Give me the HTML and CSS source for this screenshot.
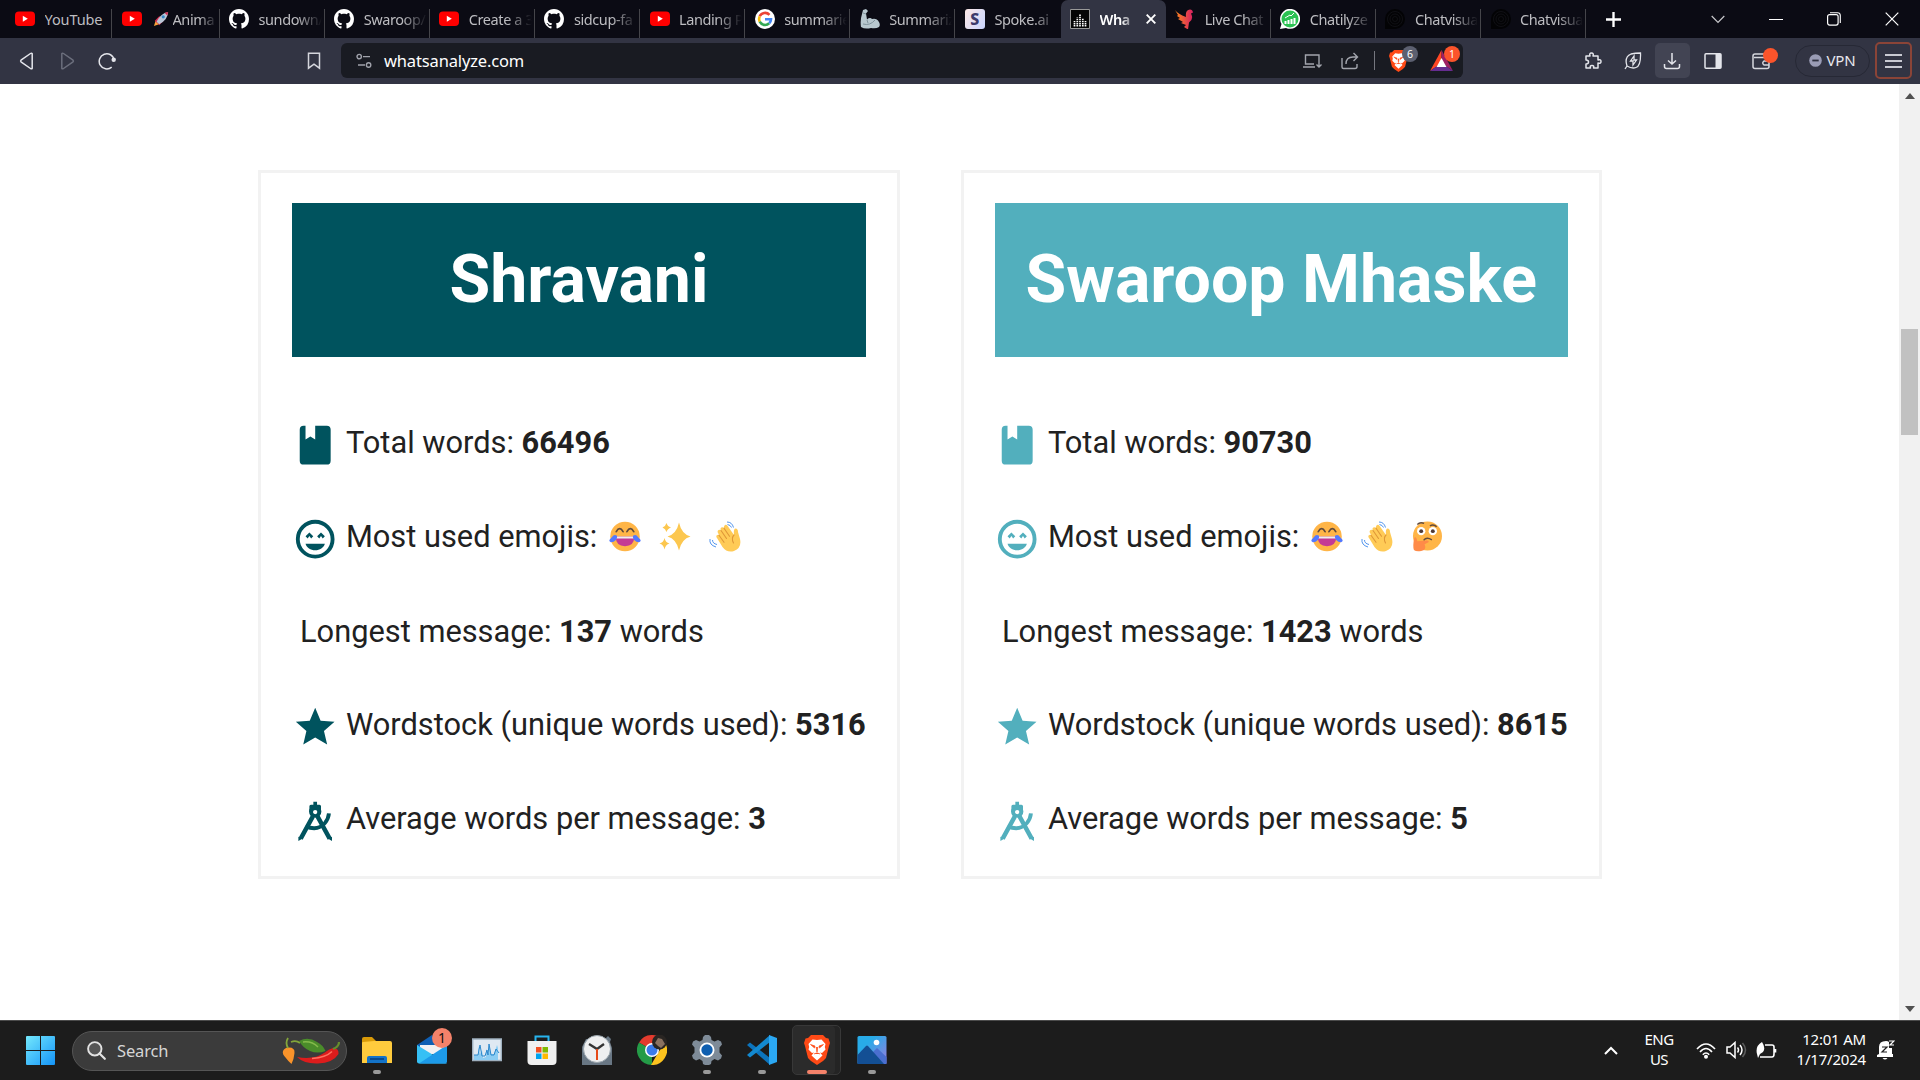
FILE: index.html
```html
<!DOCTYPE html>
<html lang="en">
<head>
<meta charset="utf-8">
<title>WhatsAnalyze</title>
<link rel="stylesheet" href="styles.css">
</head>
<body>
<svg class="defs" width="0" height="0">
  <symbol id="yt" viewBox="0 0 20 20"><rect x="0" y="2.500" width="20" height="14.500" rx="4" fill="#f00"/><path d="M7.800 6.800v6l5-3z" fill="#fff"/></symbol>
  <symbol id="gh" viewBox="0 0 16 16"><path fill="#fff" d="M8 0C3.580 0 0 3.580 0 8c0 3.540 2.290 6.530 5.470 7.590.4.070.55-.17.55-.38 0-.19-.01-.82-.01-1.490-2.010.37-2.530-.49-2.690-.94-.09-.23-.48-.94-.82-1.130-.28-.15-.68-.52-.01-.53.63-.01 1.080.58 1.230.82.72 1.210 1.870.87 2.330.66.07-.52.28-.87.51-1.070-1.780-.2-3.640-.89-3.640-3.950 0-.87.31-1.590.82-2.150-.08-.2-.36-1.020.08-2.120 0 0 .67-.21 2.200.82.64-.18 1.320-.27 2-.27s1.360.09 2 .27c1.530-1.040 2.200-.82 2.200-.82.44 1.100.16 1.920.08 2.120.51.56.82 1.270.82 2.150 0 3.070-1.870 3.750-3.650 3.950.29.25.54.73.54 1.480 0 1.070-.01 1.930-.01 2.200 0 .21.15.46.55.38A8.010 8.010 0 0 0 16 8c0-4.420-3.580-8-8-8z"/></symbol>
  <symbol id="swirl" viewBox="0 0 20 20"><path d="M0 20V10a10 10 0 1 1 10 10z" fill="#030305"/><g fill="none" stroke="#15151b" stroke-width=".7"><circle cx="10" cy="10" r="7.500"/><circle cx="10" cy="10" r="5"/><circle cx="10" cy="10" r="2.500"/></g></symbol>
  <symbol id="lion" viewBox="0 0 26 30"><path d="M7 0h12l3 3 2.500.5L26 8l-1 3-3 12-3 3-6 4-6-4-3-3L1 11 0 8l1.500-4.500L4 3z" fill="#ff4a16"/><path d="M13 5l4.500-.5L21.500 9l-.7 3 .7 2.500L18 18l-2-.5 2.500 3L13 25.500 7.500 20.500l2.500-3L8 18l-3.500-3.500.7-2.500-.7-3 4-4.500z" fill="#fff"/><path d="M6.500 9.500l4.500 1.500-.5 2zM19.500 9.500L15 11l.5 2zM12.200 12l.8 5 .8-5M10 19l3-1.200 3 1.200" fill="#ff4a16" stroke="#ff4a16" stroke-width=".7"/></symbol>
  <symbol id="book" viewBox="0 0 24 24"><path d="M18 22a2 2 0 0 0 2-2V4a2 2 0 0 0-2-2h-6v7L9.500 7.500 7 9V2H6a2 2 0 0 0-2 2v16a2 2 0 0 0 2 2z"/></symbol>
  <symbol id="happy" viewBox="0 0 24 24"><circle cx="12" cy="12" r="9" fill="none" stroke="currentColor" stroke-width="2"/><path d="M7 14.300c.6 2.100 2.600 3.400 5 3.400s4.400-1.300 5-3.400zM7 10.500l1.100 1.100L9 10.400l.9 1.200L11 10.500 9 8.500zM13 10.500l1.100 1.100.9-1.200.9 1.200 1.100-1.100-2-2z"/></symbol>
  <symbol id="star" viewBox="0 0 24 24"><path d="M12 17.270L18.180 21l-1.640-7.030L22 9.240l-7.190-.62L12 2 9.190 8.620 2 9.240l5.450 4.730L5.820 21z"/></symbol>
  <symbol id="compass" viewBox="0 0 24 24"><g fill="none" stroke="currentColor"><path d="M12 2v3" stroke-width="1.900"/><circle cx="12" cy="7" r="2.100" stroke-width="2.200"/><path d="M10.800 9.500L4.500 21M13.200 9.500L19.500 21" stroke-width="2.300"/><path d="M7 14.700c3.900 1.500 7.500 1.300 10-1.700 1.200-1.500 2-3.200 2.100-5" stroke-width="2"/></g><path d="M9 4.300q0-.8.800-.8h4.400q.8 0 .8.800V7H9zM3.300 20v2.200l2.200-1.200zM20.700 20v2.200l-2.200-1.200z"/><circle cx="12" cy="7.300" r="1.100" fill="#fff"/></symbol>
  <symbol id="joy" viewBox="0 0 33 31"><circle cx="16.500" cy="15.500" r="15.200" fill="#ffb547"/><path d="M7.500 10.500q3.500-6 7 0M18.500 10.500q3.500-6 7 0" fill="none" stroke="#614a3c" stroke-width="1.800" stroke-linecap="round"/><path d="M7 15.500h19q0 10-9.500 10T7 15.500z" fill="#c43a94"/><path d="M7 15.500h19v2H7.200z" fill="#eee"/><path d="M8 14.500q1 2-1 4.500T2 21.500Q-.5 20 .8 18.500L4.500 14.500q1.500-1.300 3.500 0zM25 14.500q-1 2 1 4.500t5 2.500q2.500-1.500 1.200-3L28.500 14.500q-1.500-1.300-3.500 0z" fill="#5378ff"/></symbol>
  <symbol id="sparkle" viewBox="0 0 32 31"><path d="M20 1.500Q22.500 13 31.500 15.500 22.500 18 20 29.500 17.500 18 8.500 15.500 17.500 13 20 1.500zM7.500 2Q8.500 5.500 12 6.500 8.500 7.500 7.500 11 6.500 7.500 3.500 6.500 6.500 5.500 7.500 2zM5.500 17Q6.500 21.500 10.500 22.500 6.500 23.500 5.500 28.500 4.500 23.500.5 22.500 4.500 21.500 5.500 17z" fill="#fcc74f"/></symbol>
  <symbol id="wave" viewBox="0 0 32 31"><path d="M8 17q-1.500-2 .3-3 1-.7 2 .3L9 12q-1-2 .5-3 1.300-.8 2.500.5-1.200-2 .3-3 1.500-1 2.700.7Q14.500 5 16 4q1.300-.7 2.500.7L25 14q-.8-6 1.500-6.500Q29 7.500 29 11l2 7q2 9-6 12-7 2-11.500-4z" fill="#ffcb57"/><path d="M12 9.500l5.500 8M15 7.200l5.500 8M10 14.300l5 7M25 14q-3 3-.5 8" stroke="#df9738" stroke-width="1.100" fill="none" stroke-linecap="round"/><path d="M18 1q5 0 6.500 5.500M18.500 3.500q3 .5 4 3M1 18q-1 6 6 8M3.500 19q0 3.500 4.500 4.500" stroke="#5295ee" stroke-width="1" fill="none"/></symbol>
  <symbol id="think" viewBox="0 0 32 32"><circle cx="16.500" cy="15.500" r="15" fill="#ffb547"/><circle cx="10" cy="10.500" r="4.300" fill="#fff"/><circle cx="22" cy="10.500" r="4.300" fill="#fff"/><circle cx="10" cy="10.500" r="2" fill="#503a36"/><circle cx="22" cy="10.500" r="2" fill="#503a36"/><path d="M6 3.500q3-3 7-1M19 5q4-2 7 1M12.500 20q3-4 8.500-.5" stroke="#614a3c" stroke-width="1.500" fill="none"/><path d="M3 17q2-1.500 3 4l10-1q2.500.3 1.500 2l-4 2q2.500 6-3.500 7-5 1-7.500-1Q1 26 3 17z" fill="#ff8b48"/></symbol>
</svg>

<header class="tabs">
  <div class="tab"><svg class="fav"><use href="#yt"/></svg><span class="title whole">YouTube</span></div>
  <div class="tab wide"><svg class="fav"><use href="#yt"/></svg><svg class="rocket" viewBox="0 0 18 18"><path d="M1 17l2-6 4 4z" fill="#f8a23a"/><path d="M2 11l5-5 3 1-5 7zM7 16l5-5-1-3-6 5z" fill="#d5294d"/><path d="M4 12Q9 2 17 1q0 8-10 14z" fill="#b9c6d6"/><path d="M13 2l4-1-1 4z" fill="#d5294d"/><circle cx="11.500" cy="6.500" r="1.800" fill="#3689c9"/></svg><span class="title">Anima</span></div>
  <div class="tab"><svg class="fav"><use href="#gh"/></svg><span class="title">sundown/</span></div>
  <div class="tab"><svg class="fav"><use href="#gh"/></svg><span class="title">Swaroop/</span></div>
  <div class="tab"><svg class="fav"><use href="#yt"/></svg><span class="title">Create a 3</span></div>
  <div class="tab"><svg class="fav"><use href="#gh"/></svg><span class="title">sidcup-fa</span></div>
  <div class="tab"><svg class="fav"><use href="#yt"/></svg><span class="title">Landing P</span></div>
  <div class="tab"><svg class="fav" viewBox="0 0 20 20"><circle cx="10" cy="10" r="10" fill="#fff"/><g fill="none" stroke-width="2.600"><path d="M14.500 5.800A6 6 0 0 0 4.700 7.300" stroke="#ea4335"/><path d="M4.700 7.300a6 6 0 0 0 0 5.400" stroke="#fbbc05"/><path d="M4.700 12.700a6 6 0 0 0 9.500 1.600" stroke="#34a853"/><path d="M14.200 14.300A6 6 0 0 0 16 10.200H10" stroke="#4285f4"/></g></svg><span class="title">summarie</span></div>
  <div class="tab"><svg class="fav" viewBox="0 0 20 20"><path d="M3 1l3-1 2 2-2 2.500 1 6Q10 8 12 10q4-1 6 1.500 3 4 1 6.500-3 2-8 1-6 1.500-10-1Q0 11 2 5z" fill="#b8c8cf"/><path d="M3 4l3 1M7 11l1 3M3 15q7 2 12-4" stroke="#7f929b" fill="none"/></svg><span class="title">Summariz</span></div>
  <div class="tab last"><span class="fav spoke">S</span><span class="title">Spoke.ai</span></div>
  <div class="tab active"><svg class="fav" viewBox="0 0 20 20"><path d="M.5.500h19v19H.5z" fill="#050505" stroke="#999"/><g stroke="#fff" stroke-width="1.700" stroke-dasharray="1.400 .7"><path d="M4.500 17.500v-6M7.300 17.500V8.500M10 17.500V5M12.800 17.500V9M15.500 17.500v-6"/></g></svg><span class="title">Wha</span><svg class="x" viewBox="0 0 10 10"><path d="M.7.700l8.600 8.600M9.300.700L.7 9.300" stroke="#fff" stroke-width="1.900"/></svg></div>
  <div class="tab"><svg class="fav" viewBox="0 0 20 20"><defs><linearGradient id="bird"><stop offset="0" stop-color="#ff8a1c"/><stop offset="1" stop-color="#d91f63"/></linearGradient></defs><path d="M0 1q3 4 11 7-1-7 4-7.500 2.500 0 3 3l-2 1q3 6-2 9l-1 7-4-2.500 2-2-5-2 2-1-5-3 2-1-3-2 1-1z" fill="url(#bird)"/></svg><span class="title">Live Chat</span></div>
  <div class="tab"><svg class="fav" viewBox="0 0 20 20"><path d="M0 20l1.500-5A10 10 0 1 1 6 19z" fill="#fff"/><circle cx="10" cy="10" r="8.500" fill="#2bc252"/><path d="M5.500 15v-3M8.500 15v-4M11.500 15v-5M14.500 15V9" stroke="#fff" stroke-width="2"/><path d="M5 9l5-3 1 1 3-3" stroke="#fff" fill="none"/></svg><span class="title">Chatilyze</span></div>
  <div class="tab"><svg class="fav"><use href="#swirl"/></svg><span class="title">Chatvisua</span></div>
  <div class="tab"><svg class="fav"><use href="#swirl"/></svg><span class="title">Chatvisua</span></div>
  <svg class="newtab" viewBox="0 0 14 14"><path d="M7 0v14M0 7h14" stroke="#fff" stroke-width="2.200"/></svg>
  <div class="win">
    <svg width="14" height="9" viewBox="0 0 14 9"><path d="M.7 1L7 7.500 13.300 1" fill="none" stroke="#c9c9cd" stroke-width="1.200"/></svg>
    <svg width="14" height="14" viewBox="0 0 14 14"><path d="M0 7.500h14" stroke="#fff" stroke-width="1"/></svg>
    <svg width="14" height="14" viewBox="0 0 14 14"><rect x=".6" y="2.600" width="10.500" height="10.500" rx="2" fill="none" stroke="#fff" stroke-width="1.200"/><path d="M3 .7h7.500q2.800 0 2.800 2.800V11" fill="none" stroke="#fff" stroke-width="1.100"/></svg>
    <svg width="14" height="14" viewBox="0 0 14 14"><path d="M.7.700l12.600 12.600M13.300.700L.7 13.300" stroke="#fff" stroke-width="1.200"/></svg>
  </div>
</header>

<nav class="toolbar">
  <div class="navs">
    <svg width="18" height="18" viewBox="0 0 18 18"><path d="M14.200 1.700v14.600q-.6 1-1.700.2L3 9.800q-.8-.8 0-1.600l9.500-6.700q1.100-.8 1.700.2z" fill="none" stroke="#e4e5eb" stroke-width="1.500"/></svg>
    <svg width="18" height="18" viewBox="0 0 18 18"><path d="M3.800 1.700v14.600q.6 1 1.700.2L15 9.800q.8-.8 0-1.600L5.500 1.500q-1.100-.8-1.700.2z" fill="none" stroke="#6b6e7c" stroke-width="1.500"/></svg>
    <svg width="18" height="18" viewBox="0 0 18 18"><path d="M13.700 15.200A7.600 7.600 0 1 1 16.300 8" fill="none" stroke="#e4e5eb" stroke-width="1.500"/><circle cx="15.700" cy="7.700" r="2.200" fill="#e4e5eb"/></svg>
  </div>
  <svg class="mark" width="14" height="18" viewBox="0 0 14 18"><path d="M1.500 1.200h11v15L7 12.200l-5.500 4z" fill="none" stroke="#d5d6dd" stroke-width="1.500"/></svg>
  <div class="url">
    <svg width="16" height="16" viewBox="0 0 16 16" fill="none" stroke="#a0a2ab" stroke-width="1.400"><circle cx="3.200" cy="3.600" r="2.200"/><path d="M7 3.600h7M2 12h7"/><circle cx="12.600" cy="12" r="2.200"/></svg>
    <span class="addr">whatsanalyze.com</span>
    <svg width="20" height="18" viewBox="0 0 20 18" fill="none" stroke="#a2a5ad" stroke-width="1.400"><path d="M12 12H3.500V3H17v6M1 15h12M17 9v6M14.500 12.500L17 15l2.500-2.500"/></svg>
    <svg class="share" width="18" height="18" viewBox="0 0 18 18" fill="none" stroke="#a2a5ad" stroke-width="1.400"><path d="M1 6v9q0 1.500 1.500 1.500H14q2 0 2-2V12M5 12q0-7 7-7h4M12.500 1L16.500 5l-4 4"/></svg>
    <i class="bar"></i>
    <span class="shield"><svg width="19" height="22"><use href="#lion"/></svg><b class="badge grey">6</b></span>
    <span class="bat"><svg width="23" height="21" viewBox="0 0 23 21"><path d="M11.500 0L0 21l11.500-8z" fill="#ff4724"/><path d="M11.500 0L23 21l-11.500-8z" fill="#9e1f63"/><path d="M0 21h23l-11.500-8z" fill="#662d91"/><path d="M11.500 8l-5 9h10z" fill="#fff"/></svg><b class="badge red">1</b></span>
  </div>
  <div class="tools">
    <svg class="cell" width="18" height="18" viewBox="0 0 18 18" fill="none" stroke="#e4e5eb" stroke-width="1.500"><path d="M2 4h4q-1-3 1.500-3T9 4h5v4q3-1 3 1.500T14 11v5H9.500q1-2.500-1.500-2.500T6.500 16H2v-4q2.500 0 2.500-2T2 8z" stroke-linejoin="round"/></svg>
    <svg class="cell" width="18" height="18" viewBox="0 0 18 18" fill="none" stroke="#e4e5eb" stroke-width="1.300"><path d="M1 17l2-3Q0 5 7 2q4-1 9.500-1Q17 14 12 15.500q-4 1.500-9-1.500M10 4L6.500 9H9v4l3.500-5H10z"/></svg>
    <span class="dl"><svg width="18" height="18" viewBox="0 0 18 18" fill="none" stroke="#e4e5eb" stroke-width="1.500"><path d="M9 1v11M5 8.500L9 12l4-3.500M1.500 12v2.500q0 2 2 2h11q2 0 2-2V12"/></svg></span>
    <svg class="cell" width="18" height="16" viewBox="0 0 18 16"><rect x="1" y=".8" width="16" height="14.400" rx="1" fill="none" stroke="#e4e5eb" stroke-width="1.500"/><path d="M11.500 1h5.500v14h-5.500z" fill="#e4e5eb"/></svg>
    <span class="wallet"><svg width="18" height="18" viewBox="0 0 18 18" fill="none" stroke="#d5d6dd" stroke-width="1.500"><path d="M17 5.500v9q0 2-2 2H3q-2 0-2-2V4q0-2 2-2h10v3.500H2M17 9h-5q-2.500 2 0 4h5"/></svg><i></i></span>
    <span class="vpn"><svg width="13" height="13" viewBox="0 0 13 13"><circle cx="6.500" cy="6.500" r="6.300" fill="#9a9cb5"/><path d="M3.300 6.500h6.400" stroke="#2f3140" stroke-width="1.800"/></svg>VPN</span>
    <span class="menu"><i></i><i></i><i></i></span>
  </div>
</nav>

<div class="view">
  <main class="page">
    <section class="card dark">
      <h1 class="name">Shravani</h1>
      <ul class="stats">
        <li><svg class="ico"><use href="#book"/></svg><span>Total words: <b>66496</b></span></li>
        <li><svg class="ico"><use href="#happy"/></svg><span>Most used emojis:</span><span class="emojis"><svg><use href="#joy"/></svg><svg><use href="#sparkle"/></svg><svg><use href="#wave"/></svg></span></li>
        <li class="plain"><span>Longest message: <b>137</b> words</span></li>
        <li><svg class="ico"><use href="#star"/></svg><span>Wordstock (unique words used): <b>5316</b></span></li>
        <li><svg class="ico"><use href="#compass"/></svg><span>Average words per message: <b>3</b></span></li>
      </ul>
    </section>
    <section class="card light">
      <h1 class="name">Swaroop Mhaske</h1>
      <ul class="stats">
        <li><svg class="ico"><use href="#book"/></svg><span>Total words: <b>90730</b></span></li>
        <li><svg class="ico"><use href="#happy"/></svg><span>Most used emojis:</span><span class="emojis"><svg><use href="#joy"/></svg><svg><use href="#wave"/></svg><svg><use href="#think"/></svg></span></li>
        <li class="plain"><span>Longest message: <b>1423</b> words</span></li>
        <li><svg class="ico"><use href="#star"/></svg><span>Wordstock (unique words used): <b>8615</b></span></li>
        <li><svg class="ico"><use href="#compass"/></svg><span>Average words per message: <b>5</b></span></li>
      </ul>
    </section>
  </main>
  <div class="scroll">
    <svg width="10" height="6" viewBox="0 0 10 6"><path d="M0 6l5-6 5 6z" fill="#505050"/></svg>
    <i class="thumb"></i>
    <svg width="10" height="6" viewBox="0 0 10 6"><path d="M0 0l5 6 5-6z" fill="#505050"/></svg>
  </div>
</div>

<footer class="taskbar">
  <svg class="start" viewBox="0 0 29 29"><defs><linearGradient id="w" x2="1" y2="1"><stop offset="0" stop-color="#74e8fc"/><stop offset="1" stop-color="#1494f8"/></linearGradient></defs><path d="M0 1q0-1 1-1h13v14H0zM15 0h13q1 0 1 1v13H15zM0 15h14v14H1q-1 0-1-1zM15 15h14v13q0 1-1 1H15z" fill="url(#w)"/></svg>
  <div class="search">
    <svg width="19" height="19" viewBox="0 0 19 19"><circle cx="7.800" cy="7.800" r="6.700" fill="#555" stroke="#e2e2e2" stroke-width="1.900"/><path d="M12.500 12.500l5.300 5.300" stroke="#e2e2e2" stroke-width="2.200" stroke-linecap="round"/></svg>
    <span>Search</span>
    <svg class="pepper" width="58" height="28" viewBox="0 0 58 28"><path d="M1 14q2-4 6-3.500 6 0 5.500 5.500Q12 22 9.500 27 6 24 3.500 20.500 0 17 1 14z" fill="#f9932a"/><path d="M6 11Q3 6 6 1M9 5q5-2 9 1" stroke="#84a63a" stroke-width="1.800" fill="none"/><path d="M17 4q9-5 18 1 6 3 8.500 9-8 3-15.500 0-7-3-11-10z" fill="#4a8c2a"/><path d="M21 5q9-1 15 5" stroke="#84ba4b" stroke-width="1.500" fill="none"/><path d="M15 20q17 3 27-4 5-4 9-5 6 0 5.500 6Q51 26 36 26.500 22 27 15 20z" fill="#dd1c1c"/><path d="M30 21.500q14-1 20-7" stroke="#ff7060" stroke-width="1.500" fill="none"/><path d="M51 12q6-2 6-7" stroke="#668d2c" stroke-width="2.200" fill="none"/></svg>
  </div>
  <div class="apps">
    <span class="app run"><svg viewBox="0 0 30 30"><path d="M0 4q0-2 2-2h8l4 4v8H0z" fill="#d99a08"/><path d="M0 8q0-1 1-1l11-1h16q2 0 2 2v20H0z" fill="#ffcb3d"/><path d="M5 28v-5q0-2 2-2h16q2 0 2 2v5z" fill="#1473c8"/><path d="M8 24h14" stroke="#063d7a" stroke-width="1.500"/></svg></span>
    <span class="app"><svg viewBox="0 0 30 30"><path d="M0 10L15 0l15 10v8H0z" fill="#0f5fb4"/><path d="M3 10h24v9H3z" fill="#f1f1f4"/><path d="M0 10l30 18.500H2q-2 0-2-2z" fill="#36c0f5"/><path d="M30 10L2 28.500h26q2 0 2-2z" fill="#1d9ae9"/></svg><b class="count">1</b></span>
    <span class="app"><svg viewBox="0 0 30 30"><path d="M.7 4h28.600v21.500H.7z" fill="#dfe9f2" stroke="#9fb0bf" stroke-width="1.400"/><path d="M2 25v-5h4V11l2 8 2-4 1 8 3-1v-8l3 5V9l2 10h3l3-9 1 3v12z" fill="#8ccdf3"/><path d="M2 20h4l2-10 2 11h3l2-6 1 5 1-11 2 11h3l2-6 3 4" stroke="#2c88cc" fill="none"/></svg></span>
    <span class="app"><svg viewBox="0 0 30 30"><path d="M8.500 7V1.500h13V7" fill="none" stroke="#27b4ee" stroke-width="2"/><path d="M.5 6h29v20q0 4-4 4h-21q-4 0-4-4z" fill="#f0f0f0"/><path d="M9 12h5.500v5.500H9z" fill="#f25022"/><path d="M15.500 12H21v5.500h-5.500z" fill="#7fba00"/><path d="M9 18.500h5.500V24H9z" fill="#00a4ef"/><path d="M15.500 18.500H21V24h-5.500z" fill="#ffb900"/></svg></span>
    <span class="app"><svg viewBox="0 0 30 30"><path d="M0 12L4 4l20-1 2-2 3 3-1 3 2 6v17H0z" fill="#697784"/><circle cx="15" cy="14" r="13.500" fill="#eeeff0" stroke="#9aa5ad"/><path d="M7 9l8 5 7-5" stroke="#333" stroke-width="2.300" fill="none"/><path d="M15 14v11" stroke="#e64a19" stroke-width="2"/></svg></span>
    <span class="app"><svg viewBox="0 0 30 30"><path d="M15 15L2 7.500A15 15 0 0 1 28 7.500z" fill="#e33b2e"/><path d="M15 15v15A15 15 0 0 1 2 7.500z" fill="#249b47"/><path d="M28 7.500A15 15 0 0 1 14 30l7-12z" fill="#fcc31e"/><circle cx="15" cy="15" r="7" fill="#fff"/><circle cx="15" cy="15" r="5.500" fill="#3b7bea"/><circle cx="22.500" cy="7" r="7.500" fill="#292522"/><path d="M18 8l3-5 4 1 3 5-4 4-3-2z" fill="#8a7160"/></svg></span>
    <span class="app run"><svg viewBox="0 0 30 30"><path d="M11 2l2-2h4l2 2 .5 3 3 1.500L26 5l3 1.500 1 3-2.500 3v5l2.500 3-1 3-3 2-3.500-1.500-3 2L19 29l-2 1h-4l-2-1-.5-3-3-2L4 25.500l-3-2-1-3 2.500-3v-5L0 9.500l1-3L4 5l3.500 1.500 3-1.500z" fill="#7e8b98"/><circle cx="15" cy="15" r="7.500" fill="#fff"/><circle cx="15" cy="15" r="5.700" fill="#0f5fb0"/></svg></span>
    <span class="app run"><svg viewBox="0 0 30 30"><path d="M0 10l3-2.500 20 15.500V30z" fill="#0c74bd"/><path d="M0 20l3 2.500L23 7V0z" fill="#1389d0"/><path d="M22 0l8 3v24l-8 3z" fill="#2ba8f3"/></svg></span>
    <span class="app on"><svg viewBox="-2 0 30 30"><use href="#lion" width="26" height="30"/></svg></span>
    <span class="app run"><svg viewBox="0 0 30 30"><defs><linearGradient id="ph" x2="1" y2="1"><stop offset=".3" stop-color="#28abe8"/><stop offset="1" stop-color="#9c7be0"/></linearGradient></defs><rect x=".5" y="1" width="29" height="28" rx="1.500" fill="url(#ph)"/><path d="M14 19l6-6 9.500 9v7H18z" fill="#4a6fd0"/><path d="M.5 20L9 11q1-1 2 0l16 18H.5z" fill="#134f94"/><circle cx="19.500" cy="7.500" r="2.800" fill="#fff"/></svg></span>
  </div>
  <div class="tray">
    <svg class="up" width="14" height="9" viewBox="0 0 14 9"><path d="M1 8l6-6 6 6" fill="none" stroke="#fff" stroke-width="2"/></svg>
    <div class="lang">ENG<br>US</div>
    <svg class="wifi" width="20" height="17" viewBox="0 0 20 17" fill="none" stroke="#fff" stroke-width="1.600"><path d="M1 7q9-10 18 0M4 10q6-7 12 0M6.800 12.800q3.200-3.500 6.400 0"/><circle cx="10" cy="14.700" r="1.200" fill="#fff"/></svg>
    <svg class="vol" width="21" height="18" viewBox="0 0 21 18" fill="none" stroke="#fff" stroke-width="1.500"><path d="M1 6h3l5-4.500v15L4 12H1zM11.500 6.500q2 2.500 0 5M14 4q4 5 0 10"/><path d="M16.500 2q6 7 0 14" stroke="#5c5c5c"/></svg>
    <svg class="batt" width="21" height="18" viewBox="0 0 21 18" fill="none" stroke="#fff" stroke-width="1.600"><path d="M9 4h7q2 0 2 2v7q0 3-2 3H4M19.500 8v3.500"/><path d="M1 13Q-1 5 6 1q4 6 1 10l-3 2-2 4" fill="#fff" stroke="none"/></svg>
    <div class="clock">12:01 AM<br>1/17/2024</div>
    <svg class="bell" width="18" height="20" viewBox="0 0 18 20"><path d="M2 14V7q0-6 7-6 2 0 3 1v12h4v3H0v-2zM5.500 18h5q-2.500 3-5 0zM12 8h3v7h-3z" fill="#fff"/><path d="M5 7h5L5 12h5M12 1.500h5L13 6h4" fill="none" stroke="#1c1c1c" stroke-width="1.200"/><path d="M12 1h5l-4 4h4" fill="none" stroke="#fff" stroke-width="1.200"/></svg>
  </div>
</footer>
</body>
</html>
```
FILE: styles.css
```css
* { box-sizing: border-box; }
html, body { margin: 0; height: 100%; overflow: hidden; }
body { display: flex; flex-direction: column; width: 1920px; height: 1080px; background: #fff; font-family: "Noto Sans", "Open Sans", sans-serif; }
svg { display: block; flex: none; }
.defs { position: absolute; }

.tabs { display: flex; align-items: stretch; height: 38px; flex: none; background: #0b0b14; padding-left: 6px; }
.tab { display: flex; align-items: center; gap: 9.500px; width: 105.130px; flex: none; padding: 0 3px 0 9.500px; color: #bdbdc1; font-size: 14.500px; background: linear-gradient(#45454a, #45454a) right bottom / 1px 29px no-repeat; }
.tab:first-child { width: 106px; padding-left: 9px; }
.tab.wide { width: 107.500px; }
.tab.last { background: none; }
.tab.active { background: #323443; border-radius: 7px 7px 0 0; color: #fff; font-weight: 600; padding-right: 10px; }
.fav { width: 20px; height: 20px; flex: none; }
.rocket { width: 16px; height: 16px; margin-right: -6px; margin-left: 2px; }
.title { flex: 1; min-width: 0; overflow: hidden; white-space: nowrap; letter-spacing: -.4px; line-height: 20px; padding-bottom: 1px; -webkit-mask-image: linear-gradient(90deg, #000 60%, transparent); mask-image: linear-gradient(90deg, #000 60%, transparent); }
.title.whole { -webkit-mask-image: none; mask-image: none; letter-spacing: -.1px; }
.x { width: 10px; height: 10px; }
.spoke { display: flex; align-items: center; justify-content: center; border-radius: 3px; background: linear-gradient(120deg, #fde9e6, #c9d5ff); color: #3c3b6b; font-weight: 800; font-size: 16px; }
.newtab { width: 15px; height: 15px; align-self: center; margin-left: 20px; }
.win { display: flex; align-items: center; gap: 44px; margin-left: auto; margin-right: 21px; }

.toolbar { display: flex; align-items: center; height: 46px; flex: none; background: #323443; padding: 5px 8.500px 6px 18px; }
.navs { display: flex; gap: 22px; width: 289px; }
.mark { margin-right: 20px; }
.url { display: flex; align-items: center; width: 1122px; height: 35px; background: #191b22; border-radius: 6px; padding-left: 15px; }
.addr { color: #fff; font-size: 16.500px; letter-spacing: -.15px; margin-left: 12px; flex: 1; }
.share { margin: 0 15px 0 19px; }
.bar { width: 1.500px; height: 19px; background: #75777f; margin-right: 14px; }
.shield, .bat, .wallet { position: relative; display: flex; flex: none; }
.shield { width: 41px; }
.bat { width: 33px; }
.badge { position: absolute; top: -4px; width: 16px; height: 16px; border-radius: 8px; font-size: 10.500px; line-height: 16px; font-weight: 400; text-align: center; color: #fff; }
.grey { left: 13px; background: #5c6070; }
.red { left: 14px; background: #fb542b; }
.tools { display: flex; align-items: center; margin-left: auto; }
.tools > .cell { margin-right: 22px; }
.dl { display: grid; place-items: center; width: 35px; height: 35px; margin-left: -9px; margin-right: 14px; border-radius: 5px; background: #424453; }
.wallet { width: 18px; margin: 0 25px 0 8px; }
.wallet i { position: absolute; left: 11px; top: -4px; width: 15px; height: 15px; border-radius: 50%; background: #fb542b; }
.vpn { display: flex; align-items: center; justify-content: center; gap: 5px; width: 75px; height: 32px; border: 1px solid #262835; border-radius: 16px; color: #e8e8ee; font-size: 15px; line-height: 20px; padding-bottom: 1px; letter-spacing: -.2px; }
.menu { display: flex; flex-direction: column; align-items: center; justify-content: center; gap: 4px; width: 37px; height: 37px; margin-left: 5px; border: 2px solid #8b4437; border-radius: 5px; }
.menu i { width: 17px; height: 2px; background: #c9cad2; }

.view { display: flex; flex: 1; min-height: 0; background: #fff; }
.page { flex: 1; display: flex; align-items: flex-start; gap: 61px; padding: 86px 0 0 258px; font-family: Roboto, sans-serif; color: #212121; }
.card { width: 642px; height: 709px; border: 3px solid #f2f2f2; padding: 30px 31px; }
.light { width: 640.500px; }
.name { display: grid; place-items: center; height: 154px; margin: 0 0 41px; color: #fff; font-size: 66.200px; font-weight: 700; line-height: 1; white-space: nowrap; }
.dark .name { background: #00535e; }
.light .name { background: #52afbd; }
.dark .ico { color: #00535e; }
.light .ico { color: #52afbd; }
.light .stats { margin-left: -1px; }
.stats { list-style: none; margin: 0; padding: 0; font-size: 30.800px; white-space: nowrap; }
.stats li { display: flex; align-items: center; height: 94.100px; gap: 7.500px; }
.stats li > span { position: relative; top: -2.500px; }
.stats .plain { padding-left: 8px; }
.stats .plain > span { top: -1.500px; }
.ico { width: 46.400px; height: 46.400px; fill: currentColor; }
.emojis { display: flex; gap: 18px; margin-left: 4px; }
.emojis svg { width: 32px; height: 31px; }

.scroll { display: flex; flex-direction: column; align-items: center; width: 21px; background: #f1f1f1; padding: 9px 0 8px; }
.thumb { width: 17px; height: 106px; margin: 230px 0 auto; background: #c1c1c1; }

.taskbar { display: flex; align-items: center; height: 60px; flex: none; background: #1c1c1c; border-top: 1px solid #4b4b4b; color: #fff; }
.start { width: 29px; height: 29px; margin: 0 17px 0 26px; }
.search { display: flex; align-items: center; gap: 11px; width: 275px; height: 40px; padding: 0 6px 0 14px; border: 1px solid #555; border-radius: 20px; background: #3b3b3b; color: #d6d6d6; font-size: 16.500px; }
.search span { letter-spacing: -.15px; }
.pepper { margin-left: auto; }
.apps { display: flex; margin-left: 5px; }
.app { position: relative; top: -1px; display: grid; place-items: center; width: 49px; height: 50px; margin-right: 6px; border-radius: 5px; }
.app svg { width: 30px; height: 30px; }
.run::after, .on::after { content: ""; position: absolute; bottom: 1px; left: 20.500px; width: 8px; height: 4px; border-radius: 2px; background: #999; }
.on { background: #2b2b2b; border: 1px solid #383838; box-shadow: inset -5px 0 0 #242424; }
.on::after { left: 14px; bottom: 0; width: 20px; background: #f4826a; }
.count { position: absolute; left: 25px; top: 3px; width: 20px; height: 20px; border-radius: 50%; background: #f4826a; color: #111; font-weight: 400; font-size: 14px; line-height: 20px; text-align: center; }
.tray { display: flex; align-items: center; margin-left: auto; margin-right: 25px; padding-bottom: 1px; font-size: 15px; line-height: 20px; letter-spacing: -.2px; }
.lang { width: 34px; margin: 0 20px 2px 24px; text-align: center; letter-spacing: -.5px; }
.vol { margin-left: 10px; }
.batt { margin-left: 9px; }
.clock { width: 89px; text-align: right; margin-bottom: 2px; white-space: nowrap; }
.bell { margin-left: 11px; }
```
